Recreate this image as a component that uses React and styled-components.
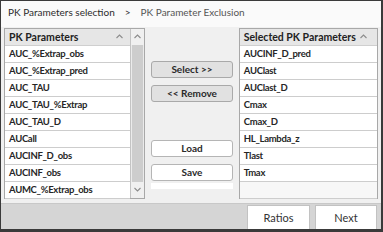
import React from "react";
import styled, { createGlobalStyle } from "styled-components";

const GlobalStyle = createGlobalStyle`
  html, body {
    margin: 0;
    padding: 0;
    background: #ffffff;
  }
  body {
    font-family: Lato, "Noto Sans", sans-serif;
  }
`;

const available = [
  "AUC_%Extrap_obs",
  "AUC_%Extrap_pred",
  "AUC_TAU",
  "AUC_TAU_%Extrap",
  "AUC_TAU_D",
  "AUCall",
  "AUCINF_D_obs",
  "AUCINF_obs",
  "AUMC_%Extrap_obs",
];

const selected = [
  "AUCINF_D_pred",
  "AUClast",
  "AUClast_D",
  "Cmax",
  "Cmax_D",
  "HL_Lambda_z",
  "Tlast",
  "Tmax",
];

const Chevron = ({ down }) => (
  <svg width="7" height="5" viewBox="0 0 7 5">
    <path
      d={down ? "M0.5 1 L3.5 4 L6.5 1" : "M0.5 4 L3.5 1 L6.5 4"}
      fill="none"
      stroke="#8c8c8c"
      strokeWidth="1.1"
    />
  </svg>
);

const Frame = styled.div`
  box-sizing: border-box;
  width: 383px;
  height: 232px;
  border: 1px solid #3a3a3a;
  border-right-width: 2px;
  border-bottom-width: 3px;
  display: flex;
  flex-direction: column;
  background: #f0f0f0;
  overflow: hidden;
`;

const Breadcrumb = styled.div`
  height: 26px;
  display: flex;
  align-items: center;
  gap: 10px;
  padding: 0 0 4px 7px;
  box-sizing: border-box;
  background: #fafafa;
  font-size: 10px;
  color: #333;
`;

const Crumb = styled.span`
  color: ${(p) => (p.$current ? "#555" : "#2c2c2c")};
`;

const Main = styled.div`
  flex: 1;
  display: flex;
  padding: 1px 3px 4px 3px;
  gap: 6px;
`;

const List = styled.div`
  width: ${(p) => p.$width}px;
  height: 171px;
  box-sizing: border-box;
  border: 1px solid #a8a8a8;
  background: #f4f4f4;
  display: flex;
`;

const Column = styled.div`
  flex: 1;
  display: flex;
  flex-direction: column;
  min-width: 0;
`;

const Header = styled.div`
  height: 17px;
  flex: none;
  display: flex;
  align-items: center;
  justify-content: space-between;
  padding: 0 ${(p) => p.$pad || 7}px 0 4px;
  background: #e6e6e6;
  border-bottom: 1px solid #cfcfcf;
  box-sizing: border-box;
  font-size: 10.5px;
  font-weight: 700;
  color: #222;
  white-space: nowrap;
`;

const Row = styled.div`
  height: 17px;
  flex: none;
  box-sizing: border-box;
  display: flex;
  align-items: center;
  padding-left: 4px;
  background: ${(p) => (p.$empty ? "#f7f7f7" : "#ffffff")};
  border-bottom: 1px solid #cdcdcd;
  font-size: 9.5px;
  font-weight: 700;
  letter-spacing: -0.3px;
  color: #262626;
  white-space: nowrap;
`;

const Scrollbar = styled.div`
  width: 13px;
  flex: none;
  display: flex;
  flex-direction: column;
  border-left: 1px solid #c4c4c4;
  background: #ebebeb;
`;

const Arrow = styled.div`
  height: 16px;
  flex: none;
  display: flex;
  align-items: center;
  justify-content: center;
  background: #f0f0f0;
`;

const Thumb = styled.div`
  flex: 1;
  margin: 0 1px;
  background: #cdcdcd;
`;

const Middle = styled.div`
  width: 82px;
  display: flex;
  flex-direction: column;
  padding-top: 33px;
`;

const Button = styled.button`
  height: 17px;
  width: 100%;
  margin-bottom: ${(p) => p.$gap || 0}px;
  border: 1px solid ${(p) => (p.$light ? "#b5b5b5" : "#a9a9a9")};
  border-radius: 3px;
  background: ${(p) => (p.$light ? "#ffffff" : "#e1e1e1")};
  font-family: Lato, "Noto Sans", sans-serif;
  font-size: 10px;
  font-weight: 700;
  color: #2a2a2a;
  padding: 0;
  line-height: 1;
`;

const Strip = styled.div`
  height: 6px;
  margin-top: 2px;
  background: #ffffff;
`;

const Footer = styled.div`
  height: 27px;
  display: flex;
  justify-content: flex-end;
  align-items: flex-end;
  gap: 5px;
  padding-right: 4px;
  background: #d5d5d5;
  border-top: 1px solid #c8c8c8;
  box-sizing: border-box;
`;

const FooterButton = styled.button`
  width: ${(p) => p.$width}px;
  height: 24px;
  border: 1px solid #c2c2c2;
  border-bottom: none;
  background: #ffffff;
  font-family: Lato, "Noto Sans", sans-serif;
  font-size: 11px;
  color: #333;
  padding: 0;
`;

const App = () => (
  <>
    <GlobalStyle />
    <Frame>
      <Breadcrumb>
        <Crumb>PK Parameters selection</Crumb>
        <Crumb>&gt;</Crumb>
        <Crumb $current>PK Parameter Exclusion</Crumb>
      </Breadcrumb>
      <Main>
        <List $width={142}>
          <Column>
            <Header>
              PK Parameters <Chevron />
            </Header>
            {available.map((name) => (
              <Row key={name}>{name}</Row>
            ))}
          </Column>
          <Scrollbar>
            <Arrow>
              <Chevron />
            </Arrow>
            <Thumb />
            <Arrow>
              <Chevron down />
            </Arrow>
          </Scrollbar>
        </List>
        <Middle>
          <Button $gap={7}>Select &gt;&gt;</Button>
          <Button $gap={38}>&lt;&lt; Remove</Button>
          <Button $light $gap={7}>Load</Button>
          <Button $light>Save</Button>
          <Strip />
        </Middle>
        <List $width={140}>
          <Column>
            <Header $pad={10}>
              Selected PK Parameters <Chevron />
            </Header>
            {selected.map((name) => (
              <Row key={name}>{name}</Row>
            ))}
            <Row $empty />
          </Column>
        </List>
      </Main>
      <Footer>
        <FooterButton $width={63}>Ratios</FooterButton>
        <FooterButton $width={62}>Next</FooterButton>
      </Footer>
    </Frame>
  </>
);

export default App;
